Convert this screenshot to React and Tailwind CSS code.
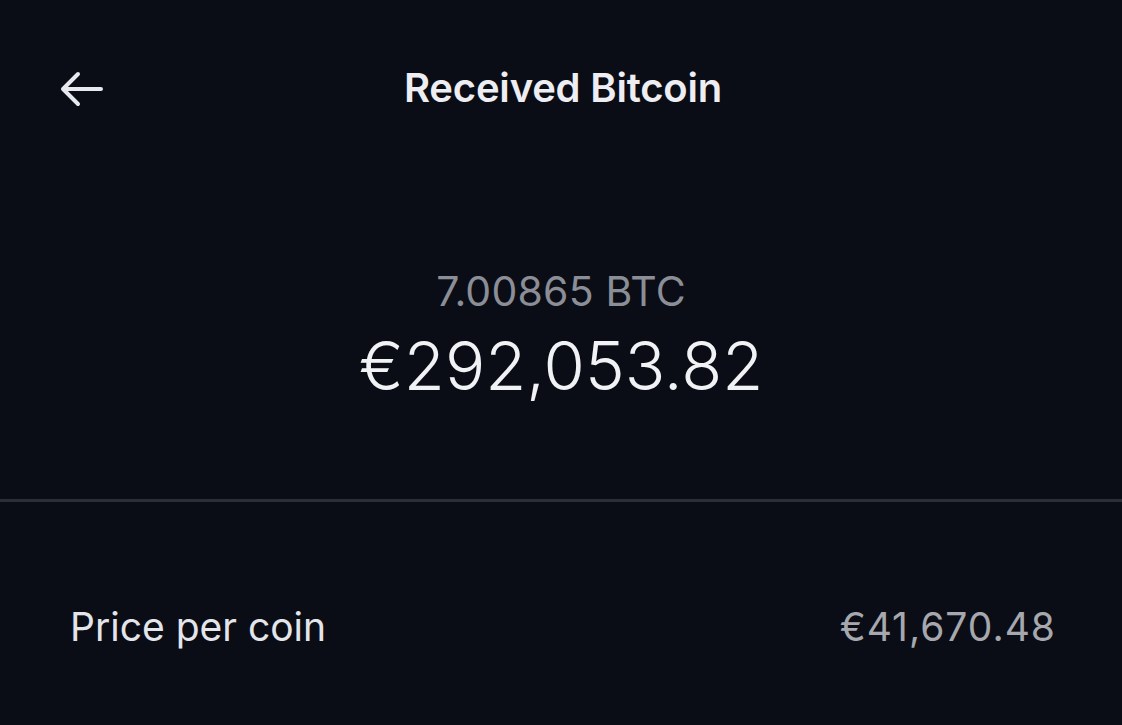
import React from "react";

function BackArrow() {
  return (
    <svg className="w-[50px] h-[40px]" viewBox="0 0 50 40" fill="none" stroke="currentColor" strokeWidth="4" strokeLinecap="round" strokeLinejoin="round">
      <path d="M45 20H8M22 5L7 20l15 15" />
    </svg>
  );
}

export default function App() {
  return (
    <div className="w-[1122px] h-[725px] bg-[#0a0d15] text-white overflow-hidden flex flex-col" style={{ fontFamily: "Inter, 'Noto Sans', sans-serif" }}>
      <div className="relative h-[180px] flex items-start justify-center pt-[63px]">
        <div className="absolute left-[56px] top-[69px] text-[#e8e9ee]">
          <BackArrow />
        </div>
        <h1 className="text-[40px] font-semibold text-[#ededf2] leading-[50px] tracking-[-0.2px] pl-[4px]">Received Bitcoin</h1>
      </div>
      <div className="flex flex-col items-center pt-[88px] h-[319px]">
        <div className="text-[41px] text-[#8b8e96] leading-[46px] tracking-[0.2px]">7.00865 BTC</div>
        <div className="text-[67px] font-light text-[#f1f2f5] leading-[80px] mt-[12px]">€292,053.82</div>
      </div>
      <div className="h-[3px] bg-[#2b2e36]" />
      <div className="flex items-center justify-between pl-[70px] pr-[66px] pt-[101px]">
        <span className="text-[39px] text-[#e4e5ea] leading-[48px]">Price per coin</span>
        <span className="text-[39px] text-[#a6a8ae] leading-[48px] tracking-[1px]">€41,670.48</span>
      </div>
    </div>
  );
}
